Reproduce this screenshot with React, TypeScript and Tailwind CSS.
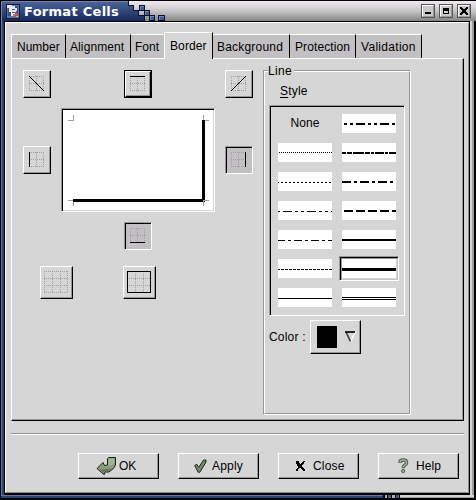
import type { ReactNode } from "react";

/* ---------- small drawing helpers ---------- */

type Edge = "diagDown" | "diagUp" | "top" | "left" | "right" | "bottom";

function EdgeIcon({ edge }: { edge: Edge }) {
  return (
    <svg width="15" height="15" viewBox="0 0 15 15" shapeRendering="crispEdges" className="block">
      <path
        d="M0 .5H15M0 7.5H15M0 14.5H15M.5 0V15M7.5 0V15M14.5 0V15"
        stroke="#a0a0a0"
        strokeDasharray="1 1"
      />
      {edge === "top" && <rect width="15" height="1" />}
      {edge === "bottom" && <rect y="14" width="15" height="1" />}
      {edge === "left" && <rect width="1" height="15" />}
      {edge === "right" && <rect x="14" width="1" height="15" />}
      {edge === "diagDown" && <path d="M0 0L15 15" stroke="#000" />}
      {edge === "diagUp" && <path d="M0 15L15 0" stroke="#000" />}
    </svg>
  );
}

function PresetIcon({ outline }: { outline: boolean }) {
  return (
    <svg width="24" height="22" viewBox="0 0 24 22" shapeRendering="crispEdges" className="block">
      <path
        d="M0 .5H24M0 7.5H24M0 14.5H24M0 21.5H24M.5 0V22M8.5 0V22M16.5 0V22M23.5 0V22"
        stroke="#a0a0a0"
        strokeDasharray="1 1"
      />
      {outline && <rect x=".5" y=".5" width="23" height="21" fill="none" stroke="#000" />}
    </svg>
  );
}

function Raised({ className, children }: { className: string; children: ReactNode }) {
  return (
    <div className={`border border-t-white border-l-white border-r-black border-b-black ${className}`}>
      <div className="flex h-full w-full border-r border-b border-[#969696]">{children}</div>
    </div>
  );
}

function Sunken({ className, children }: { className: string; children: ReactNode }) {
  return (
    <div className={`border border-t-[#969696] border-l-[#969696] border-r-white border-b-white ${className}`}>
      <div className="flex h-full w-full border-t border-l border-black">{children}</div>
    </div>
  );
}

function EdgeButton({ edge, kind = "normal" }: { edge: Edge; kind?: "normal" | "focus" | "pressed" }) {
  if (kind === "pressed") {
    return (
      <Sunken className="h-7 w-7 shrink-0 bg-[#c3c0c3]">
        <div className="pt-1 pl-1">
          <EdgeIcon edge={edge} />
        </div>
      </Sunken>
    );
  }
  if (kind === "focus") {
    return (
      <div className="h-7 w-7 shrink-0 border border-black">
        <Raised className="h-full w-full">
          <div className="pt-1 pl-1">
            <EdgeIcon edge={edge} />
          </div>
        </Raised>
      </div>
    );
  }
  return (
    <Raised className="h-7 w-7 shrink-0">
      <div className="pt-[5px] pl-[5px]">
        <EdgeIcon edge={edge} />
      </div>
    </Raised>
  );
}

/* ---------- title bar ---------- */

function TitleSquare({ x, y, w = 6 }: { x: number; y: number; w?: number }) {
  return (
    <g>
      <rect x={x} y={y} width={w} height="6" fill="#0b1430" />
      <rect x={x + 1} y={y + 1} width={w - 2} height="4" fill="#3f5a94" />
      <path d={`M${x + 1} ${y + 1.5}H${x + w - 1}M${x + 1.5} ${y + 1}V${y + 5}`} stroke="#6f86b8" />
    </g>
  );
}

function WindowButton({ children }: { children: ReactNode }) {
  return (
    <div className="h-[14px] w-[14px] border border-[#555] bg-[#c9c9c9]">
      <div className="flex h-full w-full border border-t-white border-l-white border-r-[#999] border-b-[#999]">
        <svg width="10" height="10" viewBox="0 0 10 10" shapeRendering="crispEdges" className="block">
          {children}
        </svg>
      </div>
    </div>
  );
}

function TitleBar() {
  return (
    <div className="flex h-[21px] w-[476px] shrink-0 border-t border-l border-black">
      <div className="flex h-5 w-[127px] shrink-0 border-t border-l border-[#7485ac] bg-linear-to-b from-[#4b6198] to-[#182a5c] pt-[2px] pl-1">
        <svg width="14" height="15" viewBox="0 0 14 15" shapeRendering="crispEdges" className="block shrink-0">
          <rect width="14" height="15" fill="#0f1b40" />
          <rect x="1" y="1" width="12" height="13" fill="#60759f" />
          <rect x="2" y="2" width="10" height="10" fill="#3b4f80" />
          <path d="M1 1h5v1h3v2h2v3H9V6H4V4H1zM3 4h1v4H3zM4 6h6v6H5V8H4z" fill="#e8e8ec" />
          <path d="M6 5h3v1H6zM6 8h3v1H6z" fill="#4a5a80" />
          <path d="M9 8h2v2h1v2h-2v1H8v-2h1z" fill="#d9533b" />
          <rect x="7" y="10" width="2" height="2" fill="#5aa0c8" />
          <rect x="10" y="12" width="2" height="1" fill="#e9bd4a" />
        </svg>
        <span className="mt-[1px] ml-1 font-['DejaVu_Sans'] text-[13px] leading-[14px] font-bold tracking-[0.28px] whitespace-nowrap text-white">
          Format Cells
        </span>
      </div>
      <div className="flex h-5 grow justify-end bg-linear-to-b from-[#f1e9f0] via-[#c6c6c6] to-[#858585]">
        <svg width="40" height="20" viewBox="128 1 40 20" shapeRendering="crispEdges" className="mr-auto block">
          <defs>
            <linearGradient id="blueBar" gradientUnits="userSpaceOnUse" x1="0" y1="1" x2="0" y2="21">
              <stop offset="0" stopColor="#4b6198" />
              <stop offset="1" stopColor="#182a5c" />
            </linearGradient>
          </defs>
          <path d="M128 1V5H133V11H138V16H144V21H128Z" fill="url(#blueBar)" />
          <path d="M128.5 1V5.5H133.5V10.5H138.5V15.5H144.5V21" fill="none" stroke="#0b1430" />
          <TitleSquare x={139} y={5} />
          <TitleSquare x={144} y={10} />
          <TitleSquare x={149} y={15} />
          <TitleSquare x={158} y={15} w={7} />
        </svg>
        <div className="mt-[3px] mr-[5px] flex gap-1">
          <WindowButton>
            <rect x="2" y="6" width="6" height="2" />
          </WindowButton>
          <WindowButton>
            <path d="M2 2h6v6H2zM3 5v2h4V5z" fillRule="evenodd" />
          </WindowButton>
          <WindowButton>
            <path d="M1 1h2v1h1v1h2V2h1V1h2v2H8v1H7v2h1v1h1v2H7V8H6V7H4v1H3v1H1V7h1V6h1V4H2V3H1z" />
          </WindowButton>
        </div>
      </div>
    </div>
  );
}

/* ---------- tabs ---------- */

function Tab({ label, className }: { label: string; className: string }) {
  return (
    <div
      className={`mt-[2px] h-6 shrink-0 border-t border-r border-t-white border-r-black bg-[#c3c0c3] pt-[5px] ${className}`}
    >
      {label}
    </div>
  );
}

/* ---------- line styles ---------- */

type LineStyle = { d: string; weight: number };

// Each dash is [start, end] inside a 54 pixel wide swatch.
const dashes = (list: number[][], top: number, weight: number): LineStyle => ({
  d: list.map(([a, b]) => `M${a} ${top + weight / 2}H${b}`).join(""),
  weight,
});
const repeat = (start: number, on: number, step: number) => {
  const out: number[][] = [];
  for (let x = start; x < 54; x += step) out.push([x, Math.min(54, x + on)]);
  return out;
};

const leftStyles: LineStyle[] = [
  dashes(repeat(1, 1, 2), 9, 1),
  dashes([[0, 1], ...repeat(3, 2, 4)], 10, 1),
  dashes([[0, 2], [5, 14], [17, 20], [23, 26], [29, 38], [41, 44], [47, 50], [53, 54]], 10, 1),
  dashes([[0, 7], [10, 13], [16, 24], [27, 30], [33, 41], [44, 47], [50, 54]], 10, 1),
  dashes([[0, 2], ...repeat(3, 3, 4)], 10, 1),
  dashes([[0, 54]], 10, 1),
];
const rightStyles: LineStyle[] = [
  dashes([[2, 5], [8, 11], [14, 23], [26, 29], [32, 35], [38, 47], [50, 53]], 9, 2),
  dashes([[0, 4], [5, 10], [11, 22], [23, 28], [29, 32], [33, 42], [43, 46], [47, 54]], 9, 2),
  dashes([[0, 9], [12, 15], [18, 27], [30, 33], [36, 45], [48, 51]], 9, 2),
  dashes([[2, 11], [14, 23], [26, 35], [38, 47], [50, 54]], 9, 2),
  dashes([[0, 54]], 9, 2),
  dashes([[0, 54]], 9, 3),
];

function Swatch({ style }: { style: LineStyle }) {
  return (
    <svg width="54" height="19" viewBox="0 0 54 19" shapeRendering="crispEdges" className="block shrink-0 bg-white">
      <path d={style.d} stroke="#000" strokeWidth={style.weight} />
    </svg>
  );
}

function StyleList() {
  return (
    <Sunken className="ml-[4px] h-[211px] w-[136px]">
      <div className="flex gap-[10px] pt-[7px] pl-[7px]">
        <div className="flex w-[54px] flex-col gap-[10px]">
          <div className="h-[19px] pt-[2px] text-center leading-[14px] tracking-[0.1px]">None</div>
          {leftStyles.map((s, i) => (
            <Swatch key={i} style={s} />
          ))}
        </div>
        <div className="flex w-[54px] flex-col gap-[10px]">
          {rightStyles.map((s, i) =>
            i === 5 ? (
              <Sunken key={i} className="-my-[3px] -ml-[3px] h-[25px] w-[60px]">
                <div className="h-full w-full border border-t-[#969696] border-l-[#969696] border-r-[#c3c3c3] border-b-[#c3c3c3]">
                  <Swatch style={s} />
                </div>
              </Sunken>
            ) : (
              <Swatch key={i} style={s} />
            ),
          )}
          <svg width="54" height="19" viewBox="0 0 54 19" shapeRendering="crispEdges" className="block bg-white">
            <path d="M0 9.5H54M0 11.5H54" stroke="#000" />
          </svg>
        </div>
      </div>
    </Sunken>
  );
}

/* ---------- preview ---------- */

function Preview() {
  return (
    <Sunken className="-ml-[1px] h-[104px] w-[154px] bg-white">
      <div className="border-r border-b border-[#d6d6d6]">
        <svg width="150" height="100" viewBox="63 110 150 100" shapeRendering="crispEdges" className="block">
          <path
            d="M73.5 115V121M68 120.5H74M203.5 115V121M203 120.5H209M68 200.5H74M73.5 200V206"
            stroke="#a0a0a0"
          />
          <rect x="73" y="199" width="132" height="3" />
          <rect x="202" y="120" width="3" height="82" />
          <path d="M203.5 200V206M203 200.5H209" stroke="#a0a0a0" />
        </svg>
      </div>
    </Sunken>
  );
}

/* ---------- dialog buttons ---------- */

function DialogButton({ icon, label, pad }: { icon: ReactNode; label: string; pad: string }) {
  return (
    <Raised className="h-[26px] w-[81px] shrink-0">
      <div className={`flex pt-[5px] leading-[14px] ${pad}`}>
        {icon}
        <span>{label}</span>
      </div>
    </Raised>
  );
}

const okIcon = (
  <svg width="20" height="19" viewBox="0 0 20 19" className="-mt-[2px] block shrink-0">
    <path
      d="M11.5 1.5L12.5 .5H19.5V8L17.5 11.5L13 15H9L8.2 17.8L1 11.5L7 5.5L8.5 8.5L11.5 8Z"
      fill="#8a9b80"
      stroke="#1d2419"
    />
    <path d="M12.5 1.5H18V6L15 8.5H12.5Z" fill="#a3b69a" />
    <path d="M3.5 12.5L8 16L9 14H12.5L16.5 11.5Z" fill="#68785f" />
  </svg>
);
const applyIcon = (
  <svg width="13" height="15" viewBox="0 0 13 15" className="block shrink-0">
    <path d="M.7 6.5L2.8 5.2L4.6 8.5L9.6 1H12V3L5.8 13.3H4.2Z" fill="#728f63" stroke="#1b2417" />
  </svg>
);
const closeIcon = (
  <svg width="11" height="12" viewBox="0 0 11 12" shapeRendering="crispEdges" className="mt-[1px] block shrink-0">
    <path d="M1 1h3v2h1v1h1V3h1V2h1V1h2v1H9v2H8v1H7v2h1v1h1v1h1v2H8v-1H7V9H6V8H4v1H3v2H1V9h1V8h1V6H2V4H1z" />
  </svg>
);
const helpIcon = (
  <svg width="11" height="16" viewBox="0 0 11 16" className="-mt-[1px] block shrink-0">
    <path d="M2 5V3.8Q2.3 2 5.2 2Q8.6 2 8.6 4.6Q8.6 6.4 6.7 7.3Q5.2 8.2 5.2 10.2" fill="none" stroke="#4a594a" strokeWidth="3.4" />
    <path d="M2 4.6V3.8Q2.3 2 5.2 2Q8.6 2 8.6 4.6Q8.6 6.4 6.7 7.3Q5.2 8.2 5.2 9.8" fill="none" stroke="#a3b39f" strokeWidth="1.5" />
    <circle cx="5.2" cy="13" r="1.6" fill="#a3b39f" stroke="#4a594a" />
  </svg>
);

/* ---------- dialog ---------- */

export default function App() {
  return (
    <div className="flex h-[500px] w-[476px] flex-col overflow-hidden bg-black font-['Liberation_Sans',sans-serif] text-[12px] leading-[14px] text-black">
      <TitleBar />
      <div className="flex h-[474px] shrink-0">
        <div className="w-px bg-black" />
        <div className="w-px bg-[#6576a4]" />
        <div className="w-[2px] bg-[#2b4179]" />
        <div className="flex h-[474px] w-[466px] flex-col border-t border-r border-b-2 border-l border-black">
          <div className="flex h-[471px] w-[464px] flex-col border border-t-white border-l-white border-r-[#8e8e8e] border-b-[#8e8e8e] bg-[#d6d6d6] pl-[5px]">
            {/* tab strip */}
            <div className="mt-[9px] flex h-[26px] shrink-0 whitespace-nowrap">
              <Tab label="Number" className="w-[55px] border-l border-l-white pl-[5px]" />
              <Tab label="Alignment" className="w-[65px] pl-1 tracking-[0.1px]" />
              <Tab label="Font" className="w-[33px] border-r-transparent pl-1" />
              <div className="z-10 h-[27px] w-[49px] shrink-0 border-t border-r border-l border-t-white border-r-black border-l-white bg-[#d6d6d6] pt-[6px] pl-[5px] tracking-[0.1px]">
                Border
              </div>
              <Tab label="Background" className="w-[77px] pl-1 tracking-[0.2px]" />
              <Tab label="Protection" className="w-[66px] pl-[5px] tracking-[0.1px]" />
              <Tab label="Validation" className="w-[66px] pl-[5px] tracking-[0.3px]" />
            </div>

            {/* tab page */}
            <Raised className="h-[363px] w-[453px] shrink-0">
              <div className="w-[251px] shrink-0 pt-[11px] pl-[11px]">
                <div className="flex">
                  <EdgeButton edge="diagDown" />
                  <div className="ml-[73px]">
                    <EdgeButton edge="top" kind="focus" />
                  </div>
                  <div className="ml-[73px]">
                    <EdgeButton edge="diagUp" />
                  </div>
                </div>
                <div className="mt-[10px] flex">
                  <div className="mt-[38px]">
                    <EdgeButton edge="left" />
                  </div>
                  <div className="ml-[11px]">
                    <Preview />
                  </div>
                  <div className="mt-[38px] ml-[10px]">
                    <EdgeButton edge="right" kind="pressed" />
                  </div>
                </div>
                <div className="mt-[10px] ml-[101px]">
                  <EdgeButton edge="bottom" kind="pressed" />
                </div>
                <div className="mt-4 ml-[17px] flex gap-[50px]">
                  <Raised className="h-[33px] w-[33px]">
                    <div className="pt-1 pl-[3px]">
                      <PresetIcon outline={false} />
                    </div>
                  </Raised>
                  <Raised className="h-[33px] w-[33px]">
                    <div className="pt-1 pl-[3px]">
                      <PresetIcon outline />
                    </div>
                  </Raised>
                </div>
              </div>

              {/* line group */}
              <div className="mt-[11px] h-[345px] w-[148px] shrink-0 border border-t-[#969696] border-r-white border-b-white border-l-[#969696]">
                <div className="h-[343px] w-[146px] border border-t-white border-r-[#969696] border-b-[#969696] border-l-white">
                  <div className="-mt-[8px] ml-[3px] w-[26px] bg-[#d6d6d6] leading-[14px] tracking-[0.3px]">Line</div>
                  <div className="mt-[6px] ml-[15px] tracking-[0.2px]">
                    <span className="underline decoration-1 underline-offset-2">S</span>tyle
                  </div>
                  <div className="mt-[7px]">
                    <StyleList />
                  </div>
                  <div className="mt-1 ml-1 flex">
                    <div className="w-[41px] pt-[10px] tracking-[0.2px] whitespace-nowrap">Color :</div>
                    <Raised className="h-[34px] w-[51px]">
                      <div className="flex pt-[5px] pl-[6px]">
                        <div className="h-[22px] w-5 bg-black" />
                        <svg width="12" height="12" viewBox="0 0 12 12" className="mt-[5px] ml-2 block">
                          <path d="M10.5 .8L5.5 10.6" stroke="#fff" strokeWidth="1.4" />
                          <path d="M1 .8L5.4 10.4" stroke="#444" strokeWidth="1.7" />
                          <path d="M0 1H10" stroke="#111" strokeWidth="1.8" />
                        </svg>
                      </div>
                    </Raised>
                  </div>
                </div>
              </div>
            </Raised>

            <div className="mt-3 h-[2px] w-[453px] shrink-0 border-t border-[#969696] bg-white" />

            {/* actions */}
            <div className="mt-[18px] ml-[67px] flex gap-[19px]">
              <DialogButton icon={okIcon} label="OK" pad="pl-[17px] gap-[3px]" />
              <DialogButton icon={applyIcon} label="Apply" pad="pl-[15px] gap-[5px] tracking-[0.2px]" />
              <DialogButton icon={closeIcon} label="Close" pad="pl-[16px] gap-[7px] tracking-[0.2px]" />
              <DialogButton icon={helpIcon} label="Help" pad="pl-[19px] gap-[7px] tracking-[0.1px]" />
            </div>
          </div>
        </div>
        <div className="w-[2px] bg-[#d8d2d8]" />
        <div className="w-[2px] bg-[#9c9a9c]" />
      </div>

      {/* bottom frame */}
      <div className="ml-px flex h-[3px] w-[473px] shrink-0">
        <div className="w-[382px] border-t border-[#6576a4] bg-[#2b4179]" />
        <div className="w-[2px] bg-black" />
        <div className="w-[2px] bg-[#b0aeb0]" />
        <div className="w-px bg-black" />
        <div className="w-[3px] bg-[#3f5a94]" />
        <div className="w-px bg-black" />
        <div className="w-[3px] bg-[#b0aeb0]" />
        <div className="w-px bg-black" />
        <div className="w-[3px] bg-[#3f5a94]" />
        <div className="w-px bg-black" />
        <div className="grow border-b border-[#9c9a9c] bg-[#d8d2d8]" />
      </div>
    </div>
  );
}
